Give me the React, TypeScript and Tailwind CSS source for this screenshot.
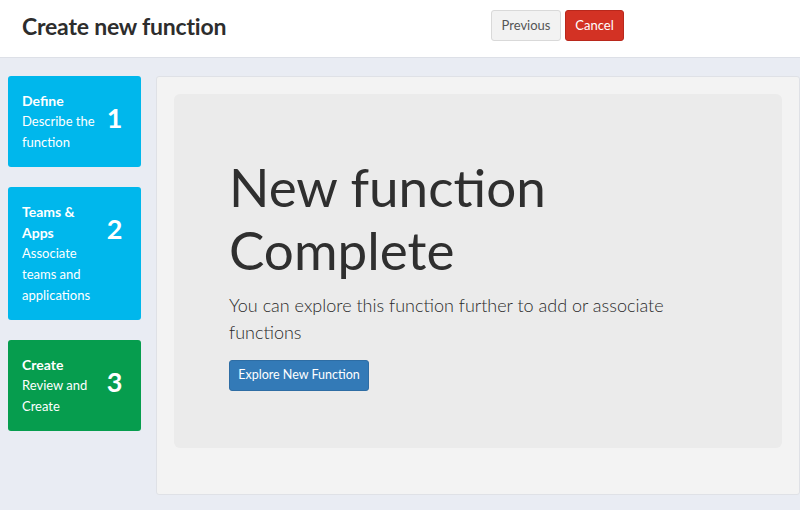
import React from 'react'

const steps = [
  { title: 'Define', desc: 'Describe the function', n: 1, color: 'bg-[#00b7ec]' },
  { title: 'Teams & Apps', desc: 'Associate teams and applications', n: 2, color: 'bg-[#00b7ec]' },
  { title: 'Create', desc: 'Review and Create', n: 3, color: 'bg-[#069d4e]' },
]

function StepCard({ title, desc, n, color }: { title: string; desc: string; n: number; color: string }) {
  return (
    <div className={`${color} rounded-[3px] flex text-white px-[14px] py-[14px]`}>
      <div className="w-[80px] text-[13px] leading-[21px]">
        <div className="font-bold text-[14px]">{title}</div>
        <div>{desc}</div>
      </div>
      <div className="flex-1 flex justify-center pt-[13px]">
        <span className="text-[27px] font-bold leading-[30px]">{n}</span>
      </div>
    </div>
  )
}

export default function App() {
  return (
    <div className="w-[800px] h-[510px] overflow-hidden bg-[#e9ecf3] text-[#333]" style={{ fontFamily: 'Lato, "Noto Sans", sans-serif' }}>
      {/* header */}
      <div className="h-[58px] bg-white border-b border-[#dde0e7] flex items-center pl-[22px] pb-[6px]">
        <h1 className="text-[23px] font-bold text-[#2d2d2d] tracking-[-0.2px] mt-[2px]">Create new function</h1>
        <div className="ml-auto mr-[176px] flex gap-[4px]">
          <button className="h-[31px] w-[70px] text-[13px] text-[#555] bg-[#f2f2f2] border border-[#d9d9d9] rounded-[3px]">
            Previous
          </button>
          <button className="h-[31px] w-[59px] text-[13px] text-white bg-[#d33224] border border-[#b9281c] rounded-[3px]">
            Cancel
          </button>
        </div>
      </div>

      <div className="flex pt-[18px] pl-[8px] gap-[15px]">
        {/* steps */}
        <div className="w-[133px] flex flex-col gap-[20px]">
          {steps.map((s) => (
            <StepCard key={s.n} {...s} />
          ))}
        </div>

        {/* main panel */}
        <div className="flex-1 h-[419px] bg-[#f3f3f3] border border-[#dfe1e6] rounded-[3px] p-[17px]">
          <div className="h-[354px] bg-[#ebebeb] rounded-[6px] pl-[55px] pt-[61px]">
            <h2 className="text-[53px] leading-[63px] text-[#2f2f2f] font-normal">
              New function
              <br />
              Complete
            </h2>
            <p className="mt-[11px] w-[460px] text-[18px] leading-[27px] text-[#2a2a2a] font-light">
              You can explore this function further to add or associate functions
            </p>
            <button className="mt-[14px] h-[31px] w-[140px] text-[12.5px] text-white bg-[#337ab7] border border-[#2e6da4] rounded-[3px]">
              Explore New Function
            </button>
          </div>
        </div>
      </div>
    </div>
  )
}
